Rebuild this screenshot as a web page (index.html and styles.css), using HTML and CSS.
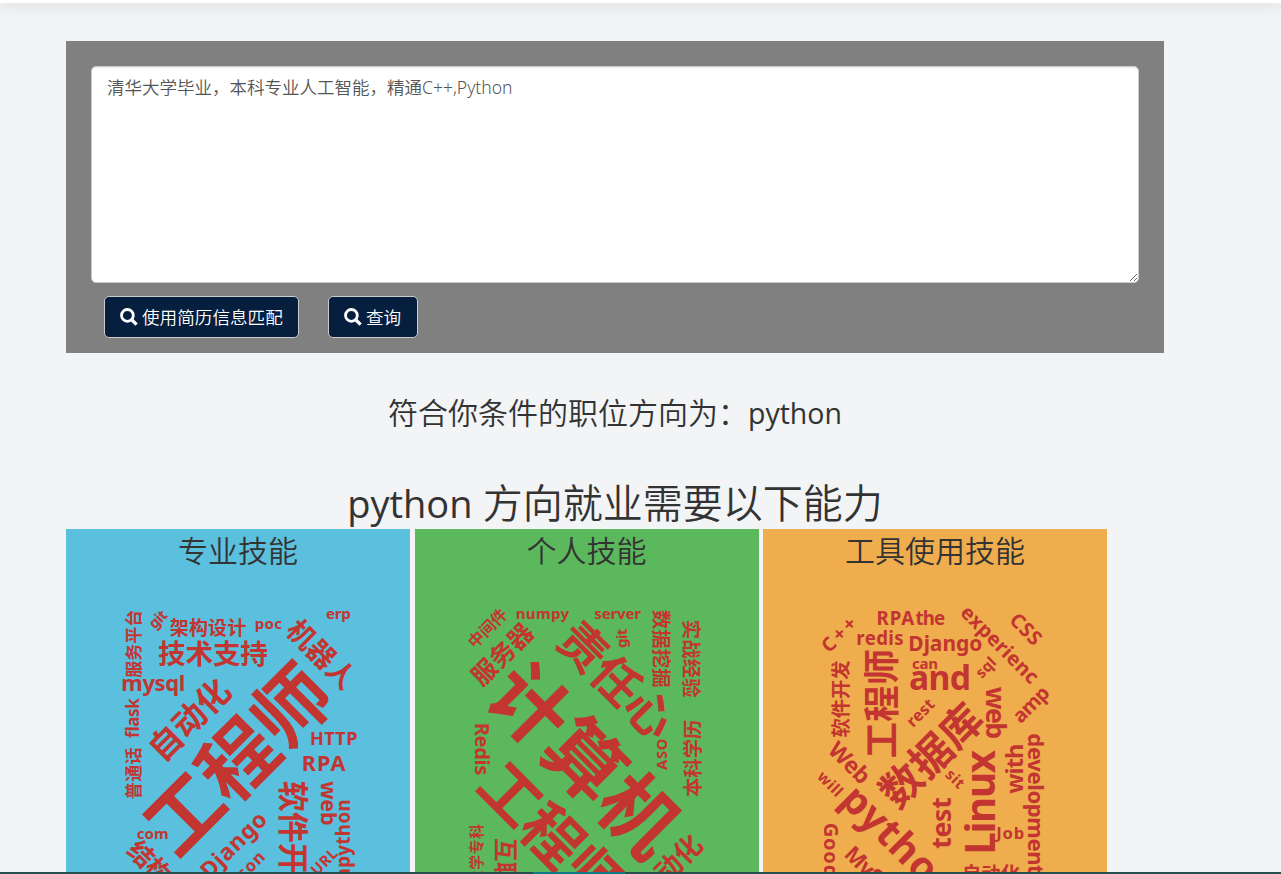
FILE: index.html
```html
<!DOCTYPE html>
<html lang="zh-CN">
<head>
<meta charset="utf-8">
<title>职位匹配</title>
<link rel="stylesheet" href="styles.css">
</head>
<body>
<header class="topbar"></header>
<main class="page">
  <form class="search">
    <textarea class="resume" spellcheck="false">清华大学毕业，本科专业人工智能，精通C++,Python</textarea>
    <div class="actions">
      <button class="btn btn-match" type="button"><svg class="icon" viewBox="0 0 18 18"><circle cx="7.4" cy="7.4" r="5.9"/><path d="M11.7 11.7L16.6 16.6"/></svg><span>使用简历信息匹配</span></button>
      <button class="btn btn-query" type="button"><svg class="icon" viewBox="0 0 18 18"><circle cx="7.4" cy="7.4" r="5.9"/><path d="M11.7 11.7L16.6 16.6"/></svg><span>查询</span></button>
    </div>
  </form>
  <h2 class="result">符合你条件的职位方向为：<span class="result-name">python</span></h2>
  <h1 class="title"><span class="title-name">python</span> 方向就业需要以下能力</h1>
  <section class="panels">
    <article class="panel blue">
      <h2 class="panel-title">专业技能</h2>
      <svg class="cloud" viewBox="0 0 1032 822">
        <text transform="translate(202 131) rotate(-90)" y=".38em" font-size="51" textLength="204">服务平台</text>
        <text transform="translate(276 58) rotate(-45)" y=".34em" font-size="45" textLength="58">git</text>
        <text transform="translate(426 83)" y=".38em" font-size="57" textLength="230">架构设计</text>
        <text transform="translate(607 72)" y=".36em" font-size="45" textLength="82">poc</text>
        <text transform="translate(817 42)" y=".36em" font-size="45" textLength="74">erp</text>
        <text transform="translate(441 161)" y=".38em" font-size="83" textLength="330">技术支持</text>
        <text transform="translate(767 162) rotate(45)" y=".38em" font-size="84" textLength="252">机器人</text>
        <text transform="translate(262 248)" y=".36em" font-size="66" textLength="192">mysql</text>
        <text transform="translate(369 358) rotate(-45)" y=".38em" font-size="100" textLength="299">自动化</text>
        <text transform="translate(513 477) rotate(-45)" y=".38em" font-size="230" textLength="684">工程师</text>
        <text transform="translate(202 355) rotate(-90)" y=".36em" font-size="51" textLength="119">flask</text>
        <text transform="translate(202 520) rotate(-90)" y=".38em" font-size="51" textLength="155">普通话</text>
        <text transform="translate(803 415)" y=".36em" font-size="54" textLength="142">HTTP</text>
        <text transform="translate(773 489)" y=".36em" font-size="65" textLength="131">RPA</text>
        <text transform="translate(682 728) rotate(90)" y=".38em" font-size="93" textLength="372">软件开发</text>
        <text transform="translate(788 610) rotate(90)" y=".36em" font-size="64" textLength="133">web</text>
        <text transform="translate(833 718) rotate(-90)" y=".36em" font-size="56" textLength="240">apython</text>
        <text transform="translate(260 701)" y=".36em" font-size="45" textLength="96">com</text>
        <text transform="translate(279 813) rotate(45)" y=".38em" font-size="76" textLength="224">结构化</text>
        <text transform="translate(502 734) rotate(-45)" y=".36em" font-size="68" textLength="250">Django</text>
        <text transform="translate(548 801) rotate(-45)" y=".36em" font-size="50" textLength="112">json</text>
        <text transform="translate(774 785) rotate(-45)" y=".36em" font-size="45" textLength="92">URL</text>
      </svg>
    </article>
    <article class="panel green">
      <h2 class="panel-title">个人技能</h2>
      <svg class="cloud" viewBox="0 0 1032 822">
        <text transform="translate(217 84) rotate(-45)" y=".38em" font-size="48" textLength="143">中间件</text>
        <text transform="translate(382 41)" y=".36em" font-size="45" textLength="160">numpy</text>
        <text transform="translate(608 41)" y=".36em" font-size="45" textLength="140">server</text>
        <text transform="translate(261 162) rotate(-45)" y=".38em" font-size="75" textLength="226">服务器</text>
        <text transform="translate(605 240) rotate(45)" y=".38em" font-size="143" textLength="426">责任心</text>
        <text transform="translate(621 115) rotate(-90)" y=".36em" font-size="45" textLength="58">git</text>
        <text transform="translate(740 146) rotate(90)" y=".38em" font-size="58" textLength="233">数据挖掘</text>
        <text transform="translate(830 176) rotate(90)" y=".38em" font-size="58" textLength="233">实战经验</text>
        <text transform="translate(511 478) rotate(45)" y=".38em" font-size="234" textLength="700">计算机</text>
        <text transform="translate(202 447) rotate(90)" y=".36em" font-size="60" textLength="158">Redis</text>
        <text transform="translate(741 463) rotate(-90)" y=".36em" font-size="44" textLength="94">ASO</text>
        <text transform="translate(834 475) rotate(-90)" y=".38em" font-size="58" textLength="232">本科学历</text>
        <text transform="translate(414 706) rotate(45)" y=".38em" font-size="180" textLength="534">工程师</text>
        <text transform="translate(185 764) rotate(-90)" y=".38em" font-size="44" textLength="184">大学专科</text>
        <text transform="translate(274 820) rotate(90)" y=".38em" font-size="70" textLength="212">互联网</text>
        <text transform="translate(760 804) rotate(-45)" y=".38em" font-size="82" textLength="246">自动化</text>
      </svg>
    </article>
    <article class="panel orange">
      <h2 class="panel-title">工具使用技能</h2>
      <svg class="cloud" viewBox="0 0 1032 822">
        <text transform="translate(227 103) rotate(-45)" y=".36em" font-size="58" textLength="122">C++</text>
        <text transform="translate(397 55)" y=".36em" font-size="56" textLength="113">RPA</text>
        <text transform="translate(502 55)" y=".36em" font-size="56" textLength="89">the</text>
        <text transform="translate(351 114)" y=".36em" font-size="56" textLength="142">redis</text>
        <text transform="translate(547 131)" y=".36em" font-size="63" textLength="222">Django</text>
        <text transform="translate(711 133) rotate(45)" y=".36em" font-size="60" textLength="302">experienc</text>
        <text transform="translate(789 87) rotate(45)" y=".36em" font-size="60" textLength="108">CSS</text>
        <text transform="translate(354 311) rotate(-90)" y=".38em" font-size="109" textLength="328">工程师</text>
        <text transform="translate(486 190)" y=".36em" font-size="45" textLength="78">can</text>
        <text transform="translate(531 233)" y=".36em" font-size="101" textLength="186">and</text>
        <text transform="translate(668 202) rotate(-45)" y=".36em" font-size="45" textLength="66">sql</text>
        <text transform="translate(233 297) rotate(-90)" y=".38em" font-size="58" textLength="231">软件开发</text>
        <text transform="translate(472 338) rotate(-45)" y=".36em" font-size="48" textLength="96">rest</text>
        <text transform="translate(503 465) rotate(-45)" y=".38em" font-size="125" textLength="376">数据库</text>
        <text transform="translate(699 339) rotate(90)" y=".36em" font-size="80" textLength="157">web</text>
        <text transform="translate(803 312) rotate(-45)" y=".36em" font-size="60" textLength="128">amp</text>
        <text transform="translate(260 488) rotate(45)" y=".36em" font-size="68" textLength="146">Web</text>
        <text transform="translate(202 551) rotate(45)" y=".36em" font-size="46" textLength="86">will</text>
        <text transform="translate(577 536) rotate(45)" y=".36em" font-size="46" textLength="60">sit</text>
        <text transform="translate(412 728) rotate(45)" y=".36em" font-size="119" textLength="436">python</text>
        <text transform="translate(534 669) rotate(-90)" y=".36em" font-size="80" textLength="155">test</text>
        <text transform="translate(651 607) rotate(-90)" y=".36em" font-size="121" textLength="315">Linux</text>
        <text transform="translate(755 506) rotate(-90)" y=".36em" font-size="71" textLength="151">with</text>
        <text transform="translate(818 612) rotate(90)" y=".36em" font-size="66" textLength="424">development</text>
        <text transform="translate(742 699)" y=".36em" font-size="50" textLength="84">Job</text>
        <text transform="translate(204 750) rotate(90)" y=".36em" font-size="60" textLength="164">Good</text>
        <text transform="translate(333 825) rotate(45)" y=".36em" font-size="66" textLength="216">MySQL</text>
        <text transform="translate(684 820)" y=".38em" font-size="58" textLength="174">自动化</text>
      </svg>
    </article>
  </section>
</main>
<footer class="edge"></footer>
</body>
</html>
```
FILE: styles.css
```css
* { box-sizing: border-box; }
body {
  margin: 0;
  height: 874px;
  overflow: hidden;
  display: flex;
  flex-direction: column;
  background: #f2f4f6;
  color: #333;
  font-family: "Open Sans", "Noto Sans CJK SC", sans-serif;
}
.topbar {
  flex: none;
  height: 3px;
  background: #fff;
  box-shadow: 0 0 16px 1px rgba(0, 0, 0, .18);
}
.page {
  flex: none;
  width: 1098px;
  height: 869px;
  margin-left: 66px;
  padding-top: 38px;
  overflow: hidden;
}
.search {
  height: 312px;
  padding: 25px;
  background: #808080;
}
.resume {
  display: block;
  width: 1048px;
  height: 217px;
  padding: 8px 15px;
  border: 1px solid #ccc;
  border-radius: 5px;
  box-shadow: inset 0 1px 1px rgba(0, 0, 0, .075);
  background: #fff;
  color: #555;
  font: 350 17.5px/25px "Noto Sans", "Noto Sans CJK SC", sans-serif;
  resize: both;
}
.actions {
  display: flex;
  gap: 29px;
  padding: 13px 0 0 13px;
}
.btn {
  display: flex;
  align-items: center;
  gap: 4px;
  height: 42px;
  padding: 0 15px;
  border: 1px solid #ccc;
  border-radius: 5px;
  background: #061f3e;
  color: #fff;
  white-space: nowrap;
  font: 350 17.6px/25px "Open Sans", "Noto Sans CJK SC", sans-serif;
}
.btn-match { width: 195px; }
.btn-query { width: 90px; }
.icon {
  flex: none;
  width: 18px;
  height: 18px;
  fill: none;
  stroke: #fff;
  stroke-width: 2.8;
}
.icon path { stroke-width: 3.4; }
h1, h2 {
  margin: 0;
  text-align: center;
  white-space: nowrap;
  font-weight: 350;
}
.result {
  height: 44px;
  margin-top: 38px;
  font-size: 30px;
  line-height: 44px;
}
.result-name {
  font-weight: 400;
  font-size: 28.5px;
}
.title {
  height: 50px;
  margin: 43px 0 1px;
  font-size: 40px;
  line-height: 50px;
}
.title-name {
  font-weight: 400;
  font-size: 38px;
}
.panels {
  display: flex;
  gap: 4.5px;
}
.panel {
  flex: none;
  width: 344px;
  height: 345px;
}
.blue { background: #5bc0de; }
.green { background: #5cb85c; }
.orange { background: #f0ad4e; }
.panel-title {
  height: 71px;
  font-size: 30px;
  line-height: 44px;
}
.cloud {
  display: block;
  width: 344px;
  height: 274px;
  fill: #c23531;
  font-family: "Noto Sans", "Noto Sans CJK SC", sans-serif;
  font-weight: 700;
  text-anchor: middle;
}
.edge {
  flex: none;
  height: 2px;
  background: linear-gradient(90deg, #24504f 533px, #137a88 533px, #137a88 625px, #24504f 625px);
}
```
